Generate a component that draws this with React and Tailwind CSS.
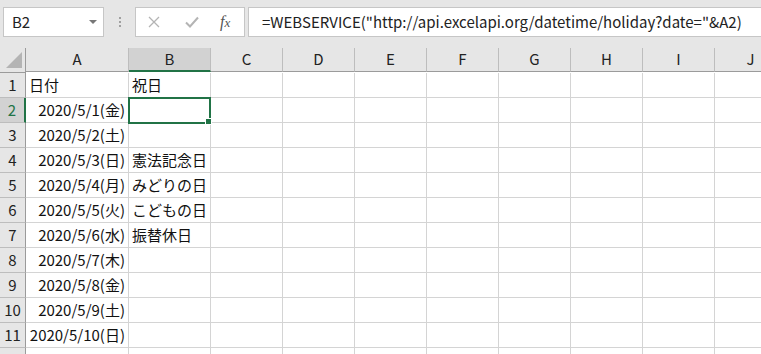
import React from "react";

const cols = ["A", "B", "C", "D", "E", "F", "G", "H", "I", "J"];

const rows = [
  ["日付", "祝日"],
  ["2020/5/1(金)", ""],
  ["2020/5/2(土)", ""],
  ["2020/5/3(日)", "憲法記念日"],
  ["2020/5/4(月)", "みどりの日"],
  ["2020/5/5(火)", "こどもの日"],
  ["2020/5/6(水)", "振替休日"],
  ["2020/5/7(木)", ""],
  ["2020/5/8(金)", ""],
  ["2020/5/9(土)", ""],
  ["2020/5/10(日)", ""],
  ["", ""],
];

const font = { fontFamily: '"Noto Sans CJK JP", "Noto Sans", sans-serif' };

const FormulaBar = () => (
  <div className="flex h-[48px] items-start bg-[#e6e6e6] pt-[7px]">
    <div className="ml-[3px] flex h-[30px] w-[101px] items-center justify-between border border-[#c6c6c6] bg-white pl-[8px] pr-[6px]">
      <span className="text-[15px] text-[#222]">B2</span>
      <svg width="8" height="5" viewBox="0 0 8 5">
        <path d="M0 0h8L4 4z" fill="#777" />
      </svg>
    </div>
    <div className="flex h-[30px] w-[31px] flex-col items-center justify-center gap-[2px]">
      <span className="h-[2px] w-[2px] bg-[#a0a0a0]" />
      <span className="h-[2px] w-[2px] bg-[#a0a0a0]" />
      <span className="h-[2px] w-[2px] bg-[#a0a0a0]" />
    </div>
    <div className="flex h-[30px] w-[110px] items-center border border-[#c6c6c6] bg-white">
      <svg className="ml-[12px]" width="12" height="12" viewBox="0 0 12 12">
        <path d="M1 1l10 10M11 1L1 11" stroke="#b4b4b4" strokeWidth="1.3" />
      </svg>
      <svg className="ml-[25px]" width="14" height="12" viewBox="0 0 14 12">
        <path d="M1 6.5l4 4L13 1.5" stroke="#b4b4b4" strokeWidth="2" fill="none" />
      </svg>
      <span
        className="ml-[21px] text-[16px] italic leading-none text-[#555]"
        style={{ fontFamily: '"Liberation Serif", serif' }}
      >
        f<span className="text-[13px]">x</span>
      </span>
    </div>
    <div className="ml-[3px] flex h-[30px] flex-1 items-center border border-r-0 border-[#c6c6c6] bg-white pl-[13px]">
      <span className="whitespace-nowrap text-[15px] text-[#222]">
        =WEBSERVICE("http://api.excelapi.org/datetime/holiday?date="&A2)
      </span>
    </div>
  </div>
);

export default function App() {
  return (
    <div
      className="h-[354px] w-[761px] overflow-hidden bg-white text-[#111]"
      style={font}
    >
      <FormulaBar />
      <div className="grid grid-cols-[26px_103px_82px_repeat(8,72px)] auto-rows-[25px]">
        <div className="relative border-b border-r border-[#9b9b9b] bg-[#e6e6e6]">
          <svg className="absolute bottom-[4px] right-[3px]" width="16" height="16" viewBox="0 0 16 16">
            <path d="M16 0V16H0z" fill="#b4b4b4" />
          </svg>
        </div>
        {cols.map((c) => (
          <div
            key={c}
            className={
              c === "B"
                ? "flex h-[24px] items-center justify-center border-b-2 border-r border-b-[#217346] border-r-[#bdbdbd] bg-[#d2d2d2] text-[15px] text-[#222]"
                : "flex h-[24px] items-center justify-center border-b border-r border-b-[#9b9b9b] border-r-[#bdbdbd] bg-[#e6e6e6] text-[15px] text-[#222]"
            }
          >
            {c}
          </div>
        ))}
        {rows.map((r, i) => (
          <React.Fragment key={i}>
            <div
              className={
                i === 1
                  ? "flex items-center justify-center border-b border-r-2 border-b-[#bdbdbd] border-r-[#217346] bg-[#d2d2d2] text-[15px] text-[#217346]"
                  : "flex items-center justify-center border-b border-r border-b-[#bdbdbd] border-r-[#9b9b9b] bg-[#e6e6e6] text-[15px] text-[#222]"
              }
            >
              {i < 11 ? i + 1 : ""}
            </div>
            <div
              className={
                i === 0
                  ? "flex items-center overflow-visible whitespace-nowrap border-b border-r border-[#d4d4d4] pl-[3px] text-[15px]"
                  : "flex items-center justify-end overflow-visible whitespace-nowrap border-b border-r border-[#d4d4d4] pr-[3px] text-[15px]"
              }
            >
              {r[0]}
            </div>
            <div className="relative flex items-center whitespace-nowrap border-b border-r border-[#d4d4d4] pl-[3px] text-[15px]">
              {r[1]}
              {i === 1 && (
                <div className="absolute -left-[1px] -top-[1px] z-10 h-[27px] w-[83px] border-2 border-[#217346]">
                  <div className="absolute -bottom-[3px] -right-[3px] h-[7px] w-[7px] border border-white bg-[#217346]" />
                </div>
              )}
            </div>
            {cols.slice(2).map((c) => (
              <div key={c} className="border-b border-r border-[#d4d4d4]" />
            ))}
          </React.Fragment>
        ))}
      </div>
    </div>
  );
}
